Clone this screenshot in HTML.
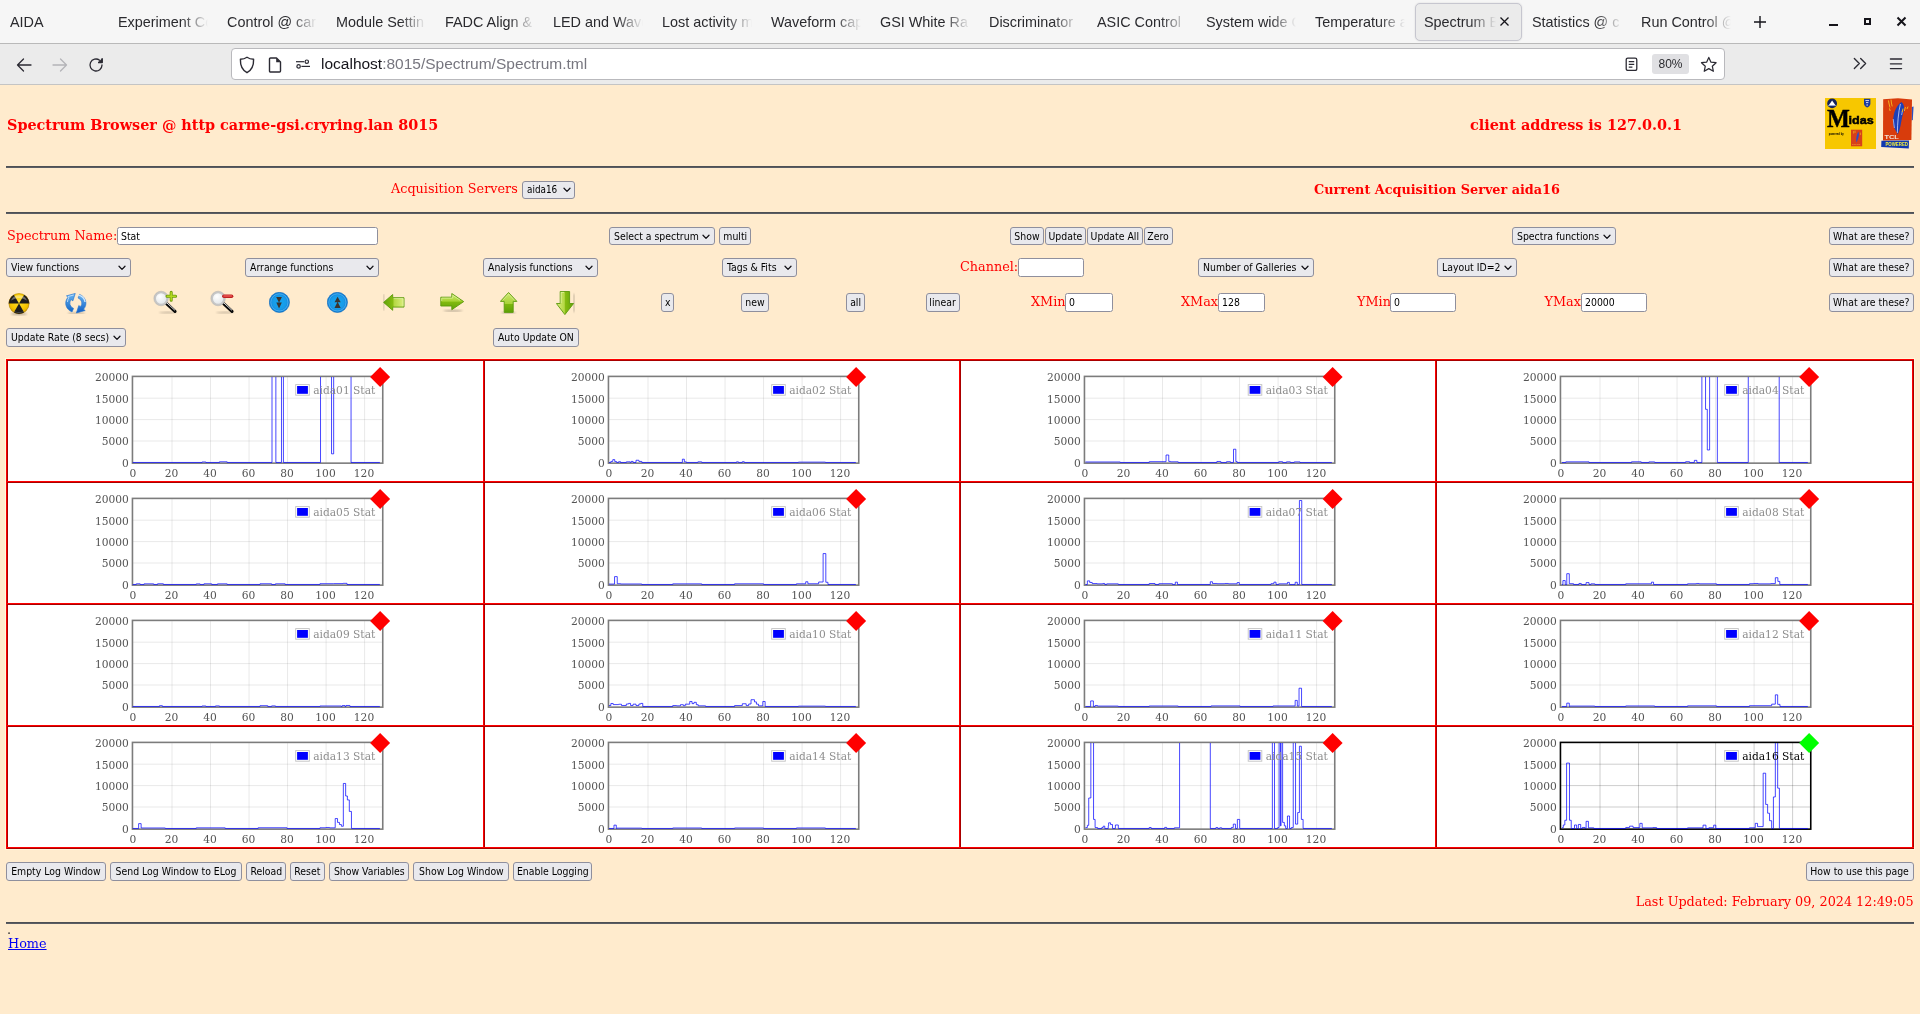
<!DOCTYPE html>
<html lang="en"><head><meta charset="utf-8"><title>Spectrum Browser</title>
<style>
*{box-sizing:border-box;margin:0;padding:0}
html,body{width:1920px;height:1014px;overflow:hidden}
body{background:#ffebcd;position:relative;font-family:"DejaVu Serif","Liberation Serif",serif;font-size:12.8px;color:#f00}
.abs{position:absolute;white-space:nowrap}
.ui{font-family:"DejaVu Sans Condensed","DejaVu Sans","Liberation Sans",sans-serif;font-size:10.67px;color:#000}
.btn{position:absolute;background:#e9e9ed;border:1px solid #8f8f9d;border-radius:3px;line-height:18px;text-align:center;white-space:nowrap;overflow:hidden}
.btn span{display:inline-block;transform:scaleX(.975);transform-origin:50% 50%}
.sel{position:absolute;background:#e9e9ed;border:1px solid #8f8f9d;border-radius:3px;line-height:18px;padding-left:3.6px;white-space:nowrap;overflow:hidden}
.sel span,.inp span{display:inline-block;transform:scaleX(.975);transform-origin:0 50%}
.sel svg{position:absolute;right:3.6px;top:5.8px}
.inp{position:absolute;background:#fff;border:1px solid #8f8f9d;border-radius:2.5px;line-height:18px;padding-left:3px;white-space:nowrap;overflow:hidden}
.hr{position:absolute;left:6px;width:1908px;height:2px;background:linear-gradient(#4e5054 50%,#5a5d64 50%)}
.t{font-family:"Liberation Sans","DejaVu Sans",sans-serif;color:#2a2a2e;position:absolute;white-space:nowrap;overflow:hidden}
</style></head>
<body>
<div id="root" style="position:absolute;left:0;top:0;width:1920px;height:1014px;will-change:transform">
<div class="abs" style="left:0;top:0;width:1920px;height:43px;background:#f6f6f6"></div>
<div class="abs" style="left:0;top:43px;width:1920px;height:1px;background:#b9b9b9"></div>
<div class="abs" style="left:0;top:44px;width:1920px;height:40px;background:#ebebeb"></div>
<div class="abs" style="left:0;top:84px;width:1920px;height:1px;background:#c4c4c4"></div>
<div class="abs" style="left:1415px;top:3px;width:107px;height:38px;background:#ebebeb;border:1px solid #c6c6cf;border-radius:5px;box-shadow:0 0 2px rgba(0,0,0,.12)"></div>
<div class="t" style="left:10px;top:13px;width:60px;font-size:14.4px;line-height:19px;">AIDA</div>
<div class="t" style="left:118px;top:13px;width:90px;font-size:14.4px;line-height:19px;-webkit-mask-image:linear-gradient(to right,#000 64px,transparent 90px);mask-image:linear-gradient(to right,#000 64px,transparent 90px);">Experiment Co</div>
<div class="t" style="left:227px;top:13px;width:90px;font-size:14.4px;line-height:19px;-webkit-mask-image:linear-gradient(to right,#000 64px,transparent 90px);mask-image:linear-gradient(to right,#000 64px,transparent 90px);">Control @ car</div>
<div class="t" style="left:336px;top:13px;width:90px;font-size:14.4px;line-height:19px;-webkit-mask-image:linear-gradient(to right,#000 64px,transparent 90px);mask-image:linear-gradient(to right,#000 64px,transparent 90px);">Module Settin</div>
<div class="t" style="left:445px;top:13px;width:90px;font-size:14.4px;line-height:19px;-webkit-mask-image:linear-gradient(to right,#000 64px,transparent 90px);mask-image:linear-gradient(to right,#000 64px,transparent 90px);">FADC Align &amp;</div>
<div class="t" style="left:553px;top:13px;width:90px;font-size:14.4px;line-height:19px;-webkit-mask-image:linear-gradient(to right,#000 64px,transparent 90px);mask-image:linear-gradient(to right,#000 64px,transparent 90px);">LED and Wave</div>
<div class="t" style="left:662px;top:13px;width:90px;font-size:14.4px;line-height:19px;-webkit-mask-image:linear-gradient(to right,#000 64px,transparent 90px);mask-image:linear-gradient(to right,#000 64px,transparent 90px);">Lost activity m</div>
<div class="t" style="left:771px;top:13px;width:90px;font-size:14.4px;line-height:19px;-webkit-mask-image:linear-gradient(to right,#000 64px,transparent 90px);mask-image:linear-gradient(to right,#000 64px,transparent 90px);">Waveform cap</div>
<div class="t" style="left:880px;top:13px;width:90px;font-size:14.4px;line-height:19px;-webkit-mask-image:linear-gradient(to right,#000 64px,transparent 90px);mask-image:linear-gradient(to right,#000 64px,transparent 90px);">GSI White Ra</div>
<div class="t" style="left:989px;top:13px;width:90px;font-size:14.4px;line-height:19px;-webkit-mask-image:linear-gradient(to right,#000 64px,transparent 90px);mask-image:linear-gradient(to right,#000 64px,transparent 90px);">Discriminator</div>
<div class="t" style="left:1097px;top:13px;width:90px;font-size:14.4px;line-height:19px;-webkit-mask-image:linear-gradient(to right,#000 64px,transparent 90px);mask-image:linear-gradient(to right,#000 64px,transparent 90px);">ASIC Control</div>
<div class="t" style="left:1206px;top:13px;width:90px;font-size:14.4px;line-height:19px;-webkit-mask-image:linear-gradient(to right,#000 64px,transparent 90px);mask-image:linear-gradient(to right,#000 64px,transparent 90px);">System wide C</div>
<div class="t" style="left:1315px;top:13px;width:90px;font-size:14.4px;line-height:19px;-webkit-mask-image:linear-gradient(to right,#000 64px,transparent 90px);mask-image:linear-gradient(to right,#000 64px,transparent 90px);">Temperature a</div>
<div class="t" style="left:1424px;top:13px;width:72px;font-size:14.4px;line-height:19px;-webkit-mask-image:linear-gradient(to right,#000 46px,transparent 72px);mask-image:linear-gradient(to right,#000 46px,transparent 72px);">Spectrum Br</div>
<div class="t" style="left:1532px;top:13px;width:90px;font-size:14.4px;line-height:19px;-webkit-mask-image:linear-gradient(to right,#000 64px,transparent 90px);mask-image:linear-gradient(to right,#000 64px,transparent 90px);">Statistics @ c</div>
<div class="t" style="left:1641px;top:13px;width:90px;font-size:14.4px;line-height:19px;-webkit-mask-image:linear-gradient(to right,#000 64px,transparent 90px);mask-image:linear-gradient(to right,#000 64px,transparent 90px);">Run Control @</div>
<svg class="abs" style="left:1499px;top:16px" width="11" height="11" viewBox="0 0 11 11"><path d="M1.5 1.5L9.5 9.5M9.5 1.5L1.5 9.5" stroke="#15141a" stroke-width="1.3" fill="none"/></svg>
<svg class="abs" style="left:1753px;top:15px" width="14" height="14" viewBox="0 0 14 14"><path d="M7 1V13M1 7H13" stroke="#15141a" stroke-width="1.4" fill="none"/></svg>
<div class="abs" style="left:1829px;top:24px;width:9px;height:2px;background:#15141a"></div>
<div class="abs" style="left:1864px;top:18px;width:7px;height:7px;border:2px solid #15141a"></div>
<svg class="abs" style="left:1896px;top:16px" width="11" height="11" viewBox="0 0 11 11"><path d="M1.5 1.5L9.5 9.5M9.5 1.5L1.5 9.5" stroke="#15141a" stroke-width="2" fill="none"/></svg>
<svg class="abs" style="left:15px;top:56.8px" width="18" height="16" viewBox="0 0 18 16"><path d="M16 8H2.5M8.5 2L2.5 8L8.5 14" stroke="#2b2a33" stroke-width="1.3" fill="none" stroke-linecap="round" stroke-linejoin="round"/></svg>
<svg class="abs" style="left:51px;top:56.8px" width="18" height="16" viewBox="0 0 18 16"><path d="M2 8H15.5M9.5 2L15.5 8L9.5 14" stroke="#b4b4b8" stroke-width="1.3" fill="none" stroke-linecap="round" stroke-linejoin="round"/></svg>
<svg class="abs" style="left:87px;top:55.8px" width="18" height="18" viewBox="0 0 18 18"><path d="M15 9A6 6 0 1 1 12.6 4.2" stroke="#2b2a33" stroke-width="1.3" fill="none" stroke-linecap="round"/><path d="M15.2 2.2V6.4H11" stroke="#2b2a33" stroke-width="1.5" fill="#2b2a33" stroke-linejoin="round"/></svg>
<div class="abs" style="left:231px;top:48px;width:1494px;height:32px;background:#fff;border:1px solid #b9b9bd;border-radius:4px"></div>
<svg class="abs" style="left:239px;top:55.6px" width="16" height="18" viewBox="0 0 16 18"><path d="M8 1.2C10 2.6 12.4 3.2 14.6 3.3C14.8 9 13 14 8 16.7C3 14 1.2 9 1.4 3.3C3.6 3.2 6 2.6 8 1.2Z" stroke="#2b2a33" stroke-width="1.4" fill="none" stroke-linejoin="round"/></svg>
<svg class="abs" style="left:268px;top:56.6px" width="14" height="16" viewBox="0 0 14 16"><path d="M2.5 1H8.5L12.5 5V14A1 1 0 0 1 11.5 15H2.5A1 1 0 0 1 1.5 14V2A1 1 0 0 1 2.5 1Z" stroke="#2b2a33" stroke-width="1.4" fill="none" stroke-linejoin="round"/><path d="M8.2 1V5.3H12.5Z" fill="#2b2a33"/></svg>
<svg class="abs" style="left:295px;top:57px" width="16" height="14" viewBox="0 0 16 14"><circle cx="11.8" cy="4.7" r="1.7" stroke="#2b2a33" stroke-width="1.2" fill="none"/><path d="M1 4.7H9.2" stroke="#2b2a33" stroke-width="1.2"/><circle cx="3.6" cy="9.4" r="1.7" stroke="#2b2a33" stroke-width="1.2" fill="none"/><path d="M6.4 9.4H15" stroke="#2b2a33" stroke-width="1.2"/></svg>
<div class="t" style="left:321px;top:54px;font-size:15.5px;line-height:20px"><span style="color:#15141a">localhost</span><span style="color:#77767f">:8015/Spectrum/Spectrum.tml</span></div>
<svg class="abs" style="left:1625.4px;top:56.8px" width="13" height="14.6" viewBox="0 0 14 16"><rect x="1.2" y="1.2" width="11.6" height="13.6" rx="1.8" stroke="#2b2a33" stroke-width="1.4" fill="none"/><path d="M4 5H10M4 8H10M4 11H8" stroke="#2b2a33" stroke-width="1.3"/></svg>
<div class="abs" style="left:1652px;top:54px;width:37px;height:20px;background:#e0e0e3;border-radius:3px"></div>
<div class="t" style="left:1652px;top:56px;width:37px;text-align:center;font-size:12px;line-height:17px">80%</div>
<svg class="abs" style="left:1700px;top:55.6px" width="17.6" height="16.7" viewBox="0 0 20 19"><path d="M10 1.6L12.5 7L18.3 7.6L14 11.6L15.2 17.4L10 14.4L4.8 17.4L6 11.6L1.7 7.6L7.5 7Z" stroke="#2b2a33" stroke-width="1.4" fill="none" stroke-linejoin="round"/></svg>
<svg class="abs" style="left:1852.6px;top:57.4px" width="14.4" height="13" viewBox="0 0 16 14"><path d="M1.5 1.5L7 7L1.5 12.5M8.5 1.5L14 7L8.5 12.5" stroke="#2b2a33" stroke-width="1.5" fill="none" stroke-linecap="round" stroke-linejoin="round"/></svg>
<svg class="abs" style="left:1888px;top:57px" width="16" height="14" viewBox="0 0 16 14"><path d="M2.4 2H13.6M2.4 6.8H13.6M2.4 11.6H13.6" stroke="#2b2a33" stroke-width="1.3" fill="none" stroke-linecap="round"/></svg>
<div class="abs" style="left:7px;top:115.63px;font-size:14.4px;line-height:18px;font-weight:bold;">Spectrum Browser @ http carme-gsi.cryring.lan 8015</div>
<div class="abs" style="left:1470px;top:115.63px;font-size:14.4px;line-height:18px;font-weight:bold;">client address is 127.0.0.1</div>
<div class="hr" style="top:166px"></div>
<div class="abs" style="left:391px;top:180.88px;font-size:12.8px;line-height:16px;">Acquisition Servers</div>
<div class="sel ui" style="left:522px;top:181px;width:53px;height:18px"><span style="transform:scaleX(.925);position:relative;top:-1px">aida16</span><svg style="right:2.8px;top:5.2px" width="8" height="6" viewBox="0 0 8 6"><path d="M1 1.2L4 4.4L7 1.2" stroke="#15141a" stroke-width="1.3" fill="none" stroke-linecap="round" stroke-linejoin="round"/></svg></div>
<div class="abs" style="left:1314px;top:181.58px;font-size:12.8px;line-height:16px;font-weight:bold;">Current Acquisition Server aida16</div>
<div class="hr" style="top:212px"></div>
<div class="abs" style="left:7px;top:227.58px;font-size:12.8px;line-height:16px;">Spectrum Name:</div>
<div class="inp ui" style="left:117px;top:227px;width:261px;height:18px"><span>Stat</span></div>
<div class="sel ui" style="left:609px;top:227px;width:106px;height:18px"><span>Select a spectrum</span><svg width="8" height="6" viewBox="0 0 8 6"><path d="M1 1.2L4 4.4L7 1.2" stroke="#15141a" stroke-width="1.3" fill="none" stroke-linecap="round" stroke-linejoin="round"/></svg></div>
<div class="btn ui" style="left:719px;top:227px;width:32px;height:18px"><span>multi</span></div>
<div class="btn ui" style="left:1010px;top:227px;width:34px;height:18px"><span>Show</span></div>
<div class="btn ui" style="left:1045px;top:227px;width:41px;height:18px"><span>Update</span></div>
<div class="btn ui" style="left:1087px;top:227px;width:56px;height:18px"><span>Update All</span></div>
<div class="btn ui" style="left:1144px;top:227px;width:29px;height:18px"><span>Zero</span></div>
<div class="sel ui" style="left:1512px;top:227px;width:104px;height:18px"><span>Spectra functions</span><svg width="8" height="6" viewBox="0 0 8 6"><path d="M1 1.2L4 4.4L7 1.2" stroke="#15141a" stroke-width="1.3" fill="none" stroke-linecap="round" stroke-linejoin="round"/></svg></div>
<div class="btn ui" style="left:1829px;top:227px;width:85px;height:18px"><span>What are these?</span></div>
<div class="sel ui" style="left:6px;top:258px;width:125px;height:19px"><span>View functions</span><svg width="8" height="6" viewBox="0 0 8 6"><path d="M1 1.2L4 4.4L7 1.2" stroke="#15141a" stroke-width="1.3" fill="none" stroke-linecap="round" stroke-linejoin="round"/></svg></div>
<div class="sel ui" style="left:245px;top:258px;width:134px;height:19px"><span>Arrange functions</span><svg width="8" height="6" viewBox="0 0 8 6"><path d="M1 1.2L4 4.4L7 1.2" stroke="#15141a" stroke-width="1.3" fill="none" stroke-linecap="round" stroke-linejoin="round"/></svg></div>
<div class="sel ui" style="left:483px;top:258px;width:115px;height:19px"><span>Analysis functions</span><svg width="8" height="6" viewBox="0 0 8 6"><path d="M1 1.2L4 4.4L7 1.2" stroke="#15141a" stroke-width="1.3" fill="none" stroke-linecap="round" stroke-linejoin="round"/></svg></div>
<div class="sel ui" style="left:722px;top:258px;width:75px;height:19px"><span>Tags &amp; Fits</span><svg width="8" height="6" viewBox="0 0 8 6"><path d="M1 1.2L4 4.4L7 1.2" stroke="#15141a" stroke-width="1.3" fill="none" stroke-linecap="round" stroke-linejoin="round"/></svg></div>
<div class="abs" style="left:960px;top:258.88px;font-size:12.8px;line-height:16px;">Channel:</div>
<div class="inp ui" style="left:1018px;top:258px;width:66px;height:19px"><span></span></div>
<div class="sel ui" style="left:1198px;top:258px;width:116px;height:19px"><span>Number of Galleries</span><svg width="8" height="6" viewBox="0 0 8 6"><path d="M1 1.2L4 4.4L7 1.2" stroke="#15141a" stroke-width="1.3" fill="none" stroke-linecap="round" stroke-linejoin="round"/></svg></div>
<div class="sel ui" style="left:1437px;top:258px;width:80px;height:19px"><span>Layout ID=2</span><svg width="8" height="6" viewBox="0 0 8 6"><path d="M1 1.2L4 4.4L7 1.2" stroke="#15141a" stroke-width="1.3" fill="none" stroke-linecap="round" stroke-linejoin="round"/></svg></div>
<div class="btn ui" style="left:1829px;top:258px;width:85px;height:19px"><span>What are these?</span></div>
<div class="btn ui" style="left:661px;top:293px;width:13px;height:19px"><span>x</span></div>
<div class="btn ui" style="left:741px;top:293px;width:28px;height:19px"><span>new</span></div>
<div class="btn ui" style="left:846px;top:293px;width:19px;height:19px"><span>all</span></div>
<div class="btn ui" style="left:926px;top:293px;width:33.5px;height:19px"><span>linear</span></div>
<div class="abs" style="left:1031px;top:293.58px;font-size:12.8px;line-height:16px;">XMin</div>
<div class="inp ui" style="left:1065px;top:293px;width:48px;height:19px"><span>0</span></div>
<div class="abs" style="left:1181px;top:293.58px;font-size:12.8px;line-height:16px;">XMax</div>
<div class="inp ui" style="left:1218px;top:293px;width:47px;height:19px"><span>128</span></div>
<div class="abs" style="left:1357px;top:293.58px;font-size:12.8px;line-height:16px;">YMin</div>
<div class="inp ui" style="left:1390px;top:293px;width:66px;height:19px"><span>0</span></div>
<div class="abs" style="left:1544.5px;top:293.58px;font-size:12.8px;line-height:16px;">YMax</div>
<div class="inp ui" style="left:1581px;top:293px;width:66px;height:19px"><span>20000</span></div>
<div class="btn ui" style="left:1829px;top:293px;width:85px;height:19px"><span>What are these?</span></div>
<div class="sel ui" style="left:6px;top:328px;width:120px;height:19px"><span>Update Rate (8 secs)</span><svg width="8" height="6" viewBox="0 0 8 6"><path d="M1 1.2L4 4.4L7 1.2" stroke="#15141a" stroke-width="1.3" fill="none" stroke-linecap="round" stroke-linejoin="round"/></svg></div>
<div class="btn ui" style="left:493px;top:328px;width:86px;height:19px"><span>Auto Update ON</span></div>
<svg width="0" height="0" style="position:absolute"><defs>
<radialGradient id="gY" cx="0.5" cy="0.4" r="0.7"><stop offset="0" stop-color="#ffe030"/><stop offset="0.6" stop-color="#f5c400"/><stop offset="1" stop-color="#c89000"/></radialGradient>
<radialGradient id="gB" cx="0.5" cy="0.5" r="0.55"><stop offset="0" stop-color="#14a8f2"/><stop offset="0.6" stop-color="#189ae8"/><stop offset="1" stop-color="#0a72cc"/></radialGradient>
<linearGradient id="gG" x1="0" y1="0" x2="0" y2="1"><stop offset="0" stop-color="#d2ea72"/><stop offset="0.48" stop-color="#a6d232"/><stop offset="0.52" stop-color="#82ba10"/><stop offset="1" stop-color="#62a208"/></linearGradient>
<linearGradient id="gGl" x1="0" y1="0" x2="1" y2="0"><stop offset="0" stop-color="#62a208"/><stop offset="0.45" stop-color="#86bc12"/><stop offset="0.52" stop-color="#b4d844"/><stop offset="1" stop-color="#dcee80"/></linearGradient>
<linearGradient id="gGu" x1="0" y1="0" x2="0" y2="1"><stop offset="0" stop-color="#cfe870"/><stop offset="0.56" stop-color="#a8d238"/><stop offset="0.6" stop-color="#7cb60e"/><stop offset="1" stop-color="#5ea006"/></linearGradient>
<linearGradient id="gGd" x1="0" y1="0" x2="1" y2="0"><stop offset="0" stop-color="#dcee80"/><stop offset="0.46" stop-color="#b4d844"/><stop offset="0.52" stop-color="#86bc12"/><stop offset="1" stop-color="#62a208"/></linearGradient>
<linearGradient id="gR2" x1="0" y1="0" x2="0" y2="1"><stop offset="0" stop-color="#0d5cc4"/><stop offset="1" stop-color="#6ab6f2"/></linearGradient>
<linearGradient id="gGh" x1="0" y1="0" x2="1" y2="0"><stop offset="0" stop-color="#7fb518"/><stop offset="0.5" stop-color="#b6dc48"/><stop offset="1" stop-color="#6aa20e"/></linearGradient>
<linearGradient id="gR" x1="0" y1="0" x2="0" y2="1"><stop offset="0" stop-color="#6ab6f2"/><stop offset="1" stop-color="#1466c4"/></linearGradient>
<radialGradient id="gL" cx="0.4" cy="0.35" r="0.7"><stop offset="0" stop-color="#ffffff"/><stop offset="1" stop-color="#dfe3e6"/></radialGradient>
<filter id="sh" x="-20%" y="-20%" width="140%" height="160%"><feGaussianBlur stdDeviation="0.8"/></filter>
</defs></svg>
<svg class="abs" style="left:8.1px;top:292.6px" width="22" height="23" viewBox="0 0 22 23"><ellipse cx="11" cy="20.9" rx="8" ry="1.3" fill="#000" opacity=".28" filter="url(#sh)"/><circle cx="11" cy="10.6" r="10.3" fill="url(#gY)"/><g fill="#1c1c1c"><path d="M11 10.6L16.15 1.68A10.3 10.3 0 0 1 21.3 10.6Z"/><path d="M11 10.6L16.15 19.52A10.3 10.3 0 0 1 5.85 19.52Z"/><path d="M11 10.6L0.7 10.6A10.3 10.3 0 0 1 5.85 1.68Z"/></g><circle cx="11" cy="10.6" r="10.1" fill="none" stroke="#6a4a00" stroke-width=".5" opacity=".6"/><path d="M3 7.6A8.6 8.6 0 0 1 19 7.6A14 14 0 0 0 3 7.6Z" fill="#fff" opacity=".35"/><path d="M4.4 17A9 9 0 0 0 17.6 17A12 12 0 0 1 4.4 17Z" fill="#fff" opacity=".25"/></svg>
<svg class="abs" style="left:64.4px;top:292.5px" width="23.6" height="21.5" viewBox="0 0 23.6 21.5"><g transform="scale(1.075,1)"><ellipse cx="11.5" cy="20.4" rx="8" ry="1.1" fill="#000" opacity=".22" filter="url(#sh)"/><path d="M7.48 18.92A9.4 9.4 0 0 1 3.8 4.16L2.27 2.87L10.49 .41L8.24 7.89L6.71 6.6A5.6 5.6 0 0 0 8.9 15.39Z" fill="url(#gR)" stroke="#2373cf" stroke-width=".6" stroke-linejoin="round"/><g transform="rotate(180 11 10.2)"><path d="M7.48 18.92A9.4 9.4 0 0 1 3.8 4.16L2.27 2.87L10.49 .41L8.24 7.89L6.71 6.6A5.6 5.6 0 0 0 8.9 15.39Z" fill="url(#gR2)" stroke="#2373cf" stroke-width=".6" stroke-linejoin="round"/></g><path d="M3.2 9A8.4 8.4 0 0 1 4.6 4.6L3.6 3.6L9 2" fill="none" stroke="#d6ecff" stroke-width=".9" opacity=".8"/><path d="M13.4 2.2A8.2 8.2 0 0 1 19.6 9" fill="none" stroke="#e4f2ff" stroke-width="1.3" opacity=".85"/></g></svg>
<svg class="abs" style="left:152.5px;top:290px" width="25" height="24" viewBox="0 0 25 24"><ellipse cx="15" cy="22.6" rx="9" ry="1" fill="#000" opacity=".22" filter="url(#sh)"/><path d="M13.6 13.6L22 21.4" stroke="#0a0a0a" stroke-width="3.2" stroke-linecap="round"/><path d="M13.8 12.8L21.6 20" stroke="#e8e8e8" stroke-width="1" stroke-linecap="round"/><circle cx="8.1" cy="8.5" r="6.2" fill="url(#gL)" stroke="#c6c6c6" stroke-width="2.1"/><circle cx="8.1" cy="8.5" r="7.3" fill="none" stroke="#a8a8a8" stroke-width=".4"/><path d="M18.2 2.2V10.2M14 6.2H22.6" stroke="#6c9c08" stroke-width="3" stroke-linecap="round"/><path d="M18.2 2.4V10M14.2 6.2H22.4" stroke="#b4d820" stroke-width="1.5" stroke-linecap="round"/></svg>
<svg class="abs" style="left:209.9px;top:290px" width="25" height="24" viewBox="0 0 25 24"><ellipse cx="15" cy="22.6" rx="9" ry="1" fill="#000" opacity=".22" filter="url(#sh)"/><path d="M13.6 13.6L22 21.4" stroke="#0a0a0a" stroke-width="3.2" stroke-linecap="round"/><path d="M13.8 12.8L21.6 20" stroke="#e8e8e8" stroke-width="1" stroke-linecap="round"/><circle cx="8.1" cy="8.5" r="6.2" fill="url(#gL)" stroke="#c6c6c6" stroke-width="2.1"/><circle cx="8.1" cy="8.5" r="7.3" fill="none" stroke="#a8a8a8" stroke-width=".4"/><path d="M13.8 6.15H21.6" stroke="#c02222" stroke-width="3.5" stroke-linecap="round"/><path d="M14 5.9H21.4" stroke="#ea5656" stroke-width="1.5" stroke-linecap="round"/></svg>
<svg class="abs" style="left:268.6px;top:291.9px" width="21" height="21" viewBox="0 0 21 21"><circle cx="10.4" cy="10.4" r="10.1" fill="url(#gB)" stroke="#0c68bc" stroke-width=".6"/><circle cx="10.4" cy="10.4" r="8.6" fill="none" stroke="#8fd4ff" stroke-width=".8" opacity=".55"/><path d="M7.2 5.1H12.9L10.05 10.7ZM7.3 10.4H12.8L10.05 16.6Z" fill="#3b3430"/></svg>
<svg class="abs" style="left:327.3px;top:291.9px" width="21" height="21" viewBox="0 0 21 21"><circle cx="10.4" cy="10.4" r="10.1" fill="url(#gB)" stroke="#0c68bc" stroke-width=".6"/><circle cx="10.4" cy="10.4" r="8.6" fill="none" stroke="#8fd4ff" stroke-width=".8" opacity=".55"/><path d="M10.6 4.8L13.7 10.2H7.5ZM10.6 9.7L13.7 16H7.5Z" fill="#3b3430"/></svg>
<svg class="abs" style="left:383.1px;top:294.2px" width="22" height="17" viewBox="0 0 22 17"><rect x="-.4" y="0" width="1.4" height="16.6" fill="#000" opacity=".25" filter="url(#sh)"/><path d="M.6 8.4L9.7 .5V3.7H21V13.1H9.7V16.3Z" fill="url(#gGl)" stroke="#5b9a0c" stroke-width=".9" stroke-linejoin="round"/><path d="M10.6 4.6H20.1V12.2" fill="none" stroke="#eefac0" stroke-width=".8" opacity=".7"/></svg>
<svg class="abs" style="left:439.6px;top:292.8px" width="25" height="19.5" viewBox="0 0 25 19.5"><ellipse cx="13" cy="17.8" rx="10" ry=".9" fill="#000" opacity=".3" filter="url(#sh)"/><path d="M.8 4.2H11.8V.5L23.7 8.6L11.8 16.7V13H.8Z" fill="url(#gG)" stroke="#5b9a0c" stroke-width=".9" stroke-linejoin="round"/><path d="M1.7 8V5.1H12.7V2.3L20 7.2" fill="none" stroke="#e8f7b0" stroke-width=".8" opacity=".75"/></svg>
<svg class="abs" style="left:500.1px;top:291.8px" width="17.5" height="22" viewBox="0 0 17.5 22"><ellipse cx="8.6" cy="20.8" rx="7.5" ry=".9" fill="#000" opacity=".3" filter="url(#sh)"/><path d="M8.55 .5L16.9 9.4H13.2V20.4H4.2V9.4H.4Z" fill="url(#gGu)" stroke="#5b9a0c" stroke-width=".9" stroke-linejoin="round"/><path d="M2.6 8.5L8.55 2L14.6 8.5" fill="none" stroke="#e8f7b0" stroke-width=".8" opacity=".6"/></svg>
<svg class="abs" style="left:556px;top:290.5px" width="19" height="24.5" viewBox="0 0 19 24.5"><rect x="17.3" y="3" width="1.3" height="18" fill="#000" opacity=".3" filter="url(#sh)"/><path d="M8.9 23.6L17.6 12.5H13.6V.5H4.2V12.5H.4Z" fill="url(#gGd)" stroke="#5b9a0c" stroke-width=".9" stroke-linejoin="round"/><path d="M5.1 12V1.4H8" fill="none" stroke="#eefac0" stroke-width=".8" opacity=".7"/></svg>
<svg class="abs" style="left:1825px;top:98px" width="51" height="51" viewBox="0 0 51 51"><rect width="51" height="51" fill="#f7c700"/><circle cx="7.1" cy="5.4" r="4.9" fill="#16245e"/><path d="M3.6 7.6L7.1 2.4L10.6 7.6Z" fill="#fff"/><path d="M3 7.6H11.2" stroke="#9fb4e8" stroke-width=".7"/><path d="M39 .8H45.4V5.6C45.4 7.8 43.8 9 42.2 9.6C40.6 9 39 7.8 39 5.6Z" fill="#1a3a9c"/><path d="M40.4 2.6H44M41 4.6H43.4M41.4 7H43" stroke="#e8ecff" stroke-width=".9"/><text x="1.9" y="28.7" font-family="'Liberation Serif',serif" font-weight="bold" font-size="24.2" fill="#000" stroke="#000" stroke-width=".4">M</text><text x="23.6" y="25.7" font-family="'Liberation Sans',sans-serif" font-weight="bold" font-size="11.2" textLength="25.2" lengthAdjust="spacingAndGlyphs" fill="#000" stroke="#000" stroke-width=".5">idas</text><text x="3.8" y="36.6" font-family="'Liberation Sans',sans-serif" font-weight="bold" font-size="3" textLength="15" lengthAdjust="spacingAndGlyphs" fill="#000">powered by</text><rect x="26" y="31.7" width="11.2" height="16.6" fill="#d8401a"/><path d="M33.4 33.6C34.6 36.6 33.6 41 31.4 44.4C30.8 41 31.6 36.4 33.4 33.6Z" fill="#2b4bc8"/><path d="M28.6 33V35.6M30 32.6V35M35.4 34.6V37" stroke="#f4c020" stroke-width=".6"/><text x="27" y="46.6" font-family="'Liberation Sans',sans-serif" font-weight="bold" font-size="2.4" textLength="8.6" lengthAdjust="spacingAndGlyphs" fill="#f2a23a">TCL/TK</text></svg>
<svg class="abs" style="left:1881px;top:98px" width="33" height="51" viewBox="0 0 33 51"><path d="M30.6 9L32.6 8.6L31.8 22L30.4 22.4Z" fill="#2a50c0"/><path d="M2.2 1.2L17 .2L31 1.6L30.4 42L2 42.6Z" fill="#d83c0c"/><path d="M20.4 4C25 7.6 22.6 14 21.2 19C19.8 25 19.4 31 16.8 36.6C15.6 33 12.4 30 12.2 26C11.6 19 13.6 8.6 20.4 4Z" fill="#1c40b8"/><path d="M19.4 6C17.4 14 16.4 26 16.4 35" stroke="#e8eeff" stroke-width=".7" fill="none"/><path d="M12.2 21L13.4 30M21.6 12L20.6 17" stroke="#e8eeff" stroke-width=".6" fill="none"/><path d="M7.4 2.4C7.8 5 8.4 7 9 9.6M10 1.6C10.2 4 10.6 6 11.2 8.4M8.4 10.4L9.2 13M22 10.6L21.2 14M24.4 9L23.4 13M27 8.6L26 11" stroke="#f4b020" stroke-width="1" fill="none"/><text x="3.4" y="41" font-family="'Liberation Sans',sans-serif" font-weight="bold" font-size="6" textLength="14.4" lengthAdjust="spacingAndGlyphs" fill="#f2e4d8">TCL</text><path d="M.4 42.8L28 42.4L27.8 50.4L.2 49Z" fill="#1038b0"/><text x="4.4" y="48.2" font-family="'Liberation Sans',sans-serif" font-weight="bold" font-size="5.2" textLength="22.6" lengthAdjust="spacingAndGlyphs" fill="#f4ee3a">POWERED</text></svg>
<div class="abs" style="left:5px;top:358px;width:1910px;height:492px;background:#fff;border:1px solid #fff8dc"></div>
<svg class="abs" style="will-change:transform;left:0;top:0;font-family:'DejaVu Serif','Liberation Serif',serif" width="1920" height="1014" viewBox="0 0 1920 1014">
<defs><clipPath id="cp"><rect x="132.45" y="377.00" width="250.30" height="86.75"/></clipPath></defs>
<g transform="translate(0.00,0.00)"><path d="M172.02 376.40V463.15M210.54 376.40V463.15M249.06 376.40V463.15M287.58 376.40V463.15M326.10 376.40V463.15M364.62 376.40V463.15M132.45 441.00H382.75M132.45 419.60H382.75M132.45 398.20H382.75" stroke="#000" stroke-opacity="0.10" stroke-width="0.9" fill="none"/><rect x="132.45" y="376.40" width="250.30" height="86.75" fill="none" stroke="#7c7c7c" stroke-width="1.6"/><path d="M132.44 462.46H202.03V461.98H205.89V462.46H219.43V461.79H227.16V462.46H272.00V334.00H275.87V462.46H281.47V334.00H283.41V462.46H320.52V334.00H331.54V453.84H333.67V334.00H351.06V462.46H379.86" stroke="#00f" stroke-opacity="0.72" stroke-width="1" stroke-linejoin="round" fill="none" clip-path="url(#cp)"/><g fill="#545454" font-size="10.67"><text x="128.8" y="466.50" text-anchor="end">0</text><text x="128.8" y="445.10" text-anchor="end">5000</text><text x="128.8" y="424.10" text-anchor="end">10000</text><text x="128.8" y="403.20" text-anchor="end">15000</text><text x="128.8" y="380.90" text-anchor="end">20000</text><text x="132.90" y="476.9" text-anchor="middle">0</text><text x="171.42" y="476.9" text-anchor="middle">20</text><text x="209.94" y="476.9" text-anchor="middle">40</text><text x="248.46" y="476.9" text-anchor="middle">60</text><text x="286.98" y="476.9" text-anchor="middle">80</text><text x="325.50" y="476.9" text-anchor="middle">100</text><text x="364.02" y="476.9" text-anchor="middle">120</text></g><g transform="translate(0.0,0)"><rect x="295.7" y="384.6" width="13.6" height="10.6" fill="#fff" stroke="#c2c2c2" stroke-width="0.9"/><rect x="297.1" y="386" width="10.8" height="7.8" fill="#00f"/><text x="313.2" y="394.1" font-size="10.67" fill="#8e8e8e">aida01 Stat</text><path d="M380.1 366.9L390.1 376.9L380.1 386.9L370.1 376.9Z" fill="#f00"/></g></g>
<g transform="translate(476.00,0.00)"><path d="M172.02 376.40V463.15M210.54 376.40V463.15M249.06 376.40V463.15M287.58 376.40V463.15M326.10 376.40V463.15M364.62 376.40V463.15M132.45 441.00H382.75M132.45 419.60H382.75M132.45 398.20H382.75" stroke="#000" stroke-opacity="0.10" stroke-width="0.9" fill="none"/><rect x="132.45" y="376.40" width="250.30" height="86.75" fill="none" stroke="#7c7c7c" stroke-width="1.6"/><path d="M132.94 462.46H134.87V461.43H136.81V459.62H138.74V461.57H140.67V462.46H142.60V461.70H144.54V462.46H150.34V461.84H154.20V462.46H155.17V461.43H157.10V462.46H160.00V460.26H162.90V461.43H165.80V462.46H206.39V459.19H208.33V461.84H210.26V462.46H221.86V461.84H225.72V462.46H260.52V461.84H262.45V462.46H266.32V461.70H268.25V462.46H322.37V462.12H349.44V462.46H379.86" stroke="#00f" stroke-opacity="0.72" stroke-width="1" stroke-linejoin="round" fill="none" clip-path="url(#cp)"/><g fill="#545454" font-size="10.67"><text x="128.8" y="466.50" text-anchor="end">0</text><text x="128.8" y="445.10" text-anchor="end">5000</text><text x="128.8" y="424.10" text-anchor="end">10000</text><text x="128.8" y="403.20" text-anchor="end">15000</text><text x="128.8" y="380.90" text-anchor="end">20000</text><text x="132.90" y="476.9" text-anchor="middle">0</text><text x="171.42" y="476.9" text-anchor="middle">20</text><text x="209.94" y="476.9" text-anchor="middle">40</text><text x="248.46" y="476.9" text-anchor="middle">60</text><text x="286.98" y="476.9" text-anchor="middle">80</text><text x="325.50" y="476.9" text-anchor="middle">100</text><text x="364.02" y="476.9" text-anchor="middle">120</text></g><g transform="translate(0.0,0)"><rect x="295.7" y="384.6" width="13.6" height="10.6" fill="#fff" stroke="#c2c2c2" stroke-width="0.9"/><rect x="297.1" y="386" width="10.8" height="7.8" fill="#00f"/><text x="313.2" y="394.1" font-size="10.67" fill="#8e8e8e">aida02 Stat</text><path d="M380.1 366.9L390.1 376.9L380.1 386.9L370.1 376.9Z" fill="#f00"/></g></g>
<g transform="translate(952.00,0.00)"><path d="M172.02 376.40V463.15M210.54 376.40V463.15M249.06 376.40V463.15M287.58 376.40V463.15M326.10 376.40V463.15M364.62 376.40V463.15M132.45 441.00H382.75M132.45 419.60H382.75M132.45 398.20H382.75" stroke="#000" stroke-opacity="0.10" stroke-width="0.9" fill="none"/><rect x="132.45" y="376.40" width="250.30" height="86.75" fill="none" stroke="#7c7c7c" stroke-width="1.6"/><path d="M133.44 461.98H168.23V462.46H197.23V461.68H214.05V455.00H216.75V461.43H218.49V461.79H226.22V462.46H264.88V461.48H268.75V462.46H274.55V461.68H278.41V462.46H281.51V449.22H283.83V461.57H285.18V462.46H326.74V461.70H330.61V462.46H334.47V461.84H338.34V462.46H342.20V461.90H348.00V462.46H379.86" stroke="#00f" stroke-opacity="0.72" stroke-width="1" stroke-linejoin="round" fill="none" clip-path="url(#cp)"/><g fill="#545454" font-size="10.67"><text x="128.8" y="466.50" text-anchor="end">0</text><text x="128.8" y="445.10" text-anchor="end">5000</text><text x="128.8" y="424.10" text-anchor="end">10000</text><text x="128.8" y="403.20" text-anchor="end">15000</text><text x="128.8" y="380.90" text-anchor="end">20000</text><text x="132.90" y="476.9" text-anchor="middle">0</text><text x="171.42" y="476.9" text-anchor="middle">20</text><text x="209.94" y="476.9" text-anchor="middle">40</text><text x="248.46" y="476.9" text-anchor="middle">60</text><text x="286.98" y="476.9" text-anchor="middle">80</text><text x="325.50" y="476.9" text-anchor="middle">100</text><text x="364.02" y="476.9" text-anchor="middle">120</text></g><g transform="translate(0.5,0)"><rect x="295.7" y="384.6" width="13.6" height="10.6" fill="#fff" stroke="#c2c2c2" stroke-width="0.9"/><rect x="297.1" y="386" width="10.8" height="7.8" fill="#00f"/><text x="313.2" y="394.1" font-size="10.67" fill="#8e8e8e">aida03 Stat</text><path d="M380.1 366.9L390.1 376.9L380.1 386.9L370.1 376.9Z" fill="#f00"/></g></g>
<g transform="translate(1428.00,0.00)"><path d="M172.02 376.40V463.15M210.54 376.40V463.15M249.06 376.40V463.15M287.58 376.40V463.15M326.10 376.40V463.15M364.62 376.40V463.15M132.45 441.00H382.75M132.45 419.60H382.75M132.45 398.20H382.75" stroke="#000" stroke-opacity="0.10" stroke-width="0.9" fill="none"/><rect x="132.45" y="376.40" width="250.30" height="86.75" fill="none" stroke="#7c7c7c" stroke-width="1.6"/><path d="M133.94 462.46H137.81V461.84H161.00V462.46H203.53V461.79H213.19V462.46H220.93V461.90H226.72V462.46H257.65V461.70H261.52V462.46H266.35V460.35H268.86V462.46H273.89V334.00H277.56V409.33H279.30V449.99H281.62V334.00H289.35V462.46H320.28V334.00H351.21V462.46H379.86" stroke="#00f" stroke-opacity="0.72" stroke-width="1" stroke-linejoin="round" fill="none" clip-path="url(#cp)"/><g fill="#545454" font-size="10.67"><text x="128.8" y="466.50" text-anchor="end">0</text><text x="128.8" y="445.10" text-anchor="end">5000</text><text x="128.8" y="424.10" text-anchor="end">10000</text><text x="128.8" y="403.20" text-anchor="end">15000</text><text x="128.8" y="380.90" text-anchor="end">20000</text><text x="132.90" y="476.9" text-anchor="middle">0</text><text x="171.42" y="476.9" text-anchor="middle">20</text><text x="209.94" y="476.9" text-anchor="middle">40</text><text x="248.46" y="476.9" text-anchor="middle">60</text><text x="286.98" y="476.9" text-anchor="middle">80</text><text x="325.50" y="476.9" text-anchor="middle">100</text><text x="364.02" y="476.9" text-anchor="middle">120</text></g><g transform="translate(1.0,0)"><rect x="295.7" y="384.6" width="13.6" height="10.6" fill="#fff" stroke="#c2c2c2" stroke-width="0.9"/><rect x="297.1" y="386" width="10.8" height="7.8" fill="#00f"/><text x="313.2" y="394.1" font-size="10.67" fill="#8e8e8e">aida04 Stat</text><path d="M380.1 366.9L390.1 376.9L380.1 386.9L370.1 376.9Z" fill="#f00"/></g></g>
<g transform="translate(0.00,122.00)"><path d="M172.02 376.40V463.15M210.54 376.40V463.15M249.06 376.40V463.15M287.58 376.40V463.15M326.10 376.40V463.15M364.62 376.40V463.15M132.45 441.00H382.75M132.45 419.60H382.75M132.45 398.20H382.75" stroke="#000" stroke-opacity="0.10" stroke-width="0.9" fill="none"/><rect x="132.45" y="376.40" width="250.30" height="86.75" fill="none" stroke="#7c7c7c" stroke-width="1.6"/><path d="M132.44 462.46H136.31V461.79H140.17V462.46H144.04V461.84H153.70V462.46H157.57V461.76H163.37V462.46H196.23V461.90H200.09V462.46H203.96V461.79H211.69V462.46H217.49V461.84H227.16V462.46H260.02V461.76H271.62V462.46H275.48V461.79H285.15V462.46H319.94V461.70H333.47V461.62H343.14V461.34H347.00V462.46H379.86" stroke="#00f" stroke-opacity="0.72" stroke-width="1" stroke-linejoin="round" fill="none" clip-path="url(#cp)"/><g fill="#545454" font-size="10.67"><text x="128.8" y="466.50" text-anchor="end">0</text><text x="128.8" y="445.10" text-anchor="end">5000</text><text x="128.8" y="424.10" text-anchor="end">10000</text><text x="128.8" y="403.20" text-anchor="end">15000</text><text x="128.8" y="380.90" text-anchor="end">20000</text><text x="132.90" y="476.9" text-anchor="middle">0</text><text x="171.42" y="476.9" text-anchor="middle">20</text><text x="209.94" y="476.9" text-anchor="middle">40</text><text x="248.46" y="476.9" text-anchor="middle">60</text><text x="286.98" y="476.9" text-anchor="middle">80</text><text x="325.50" y="476.9" text-anchor="middle">100</text><text x="364.02" y="476.9" text-anchor="middle">120</text></g><g transform="translate(0.0,0)"><rect x="295.7" y="384.6" width="13.6" height="10.6" fill="#fff" stroke="#c2c2c2" stroke-width="0.9"/><rect x="297.1" y="386" width="10.8" height="7.8" fill="#00f"/><text x="313.2" y="394.1" font-size="10.67" fill="#8e8e8e">aida05 Stat</text><path d="M380.1 366.9L390.1 376.9L380.1 386.9L370.1 376.9Z" fill="#f00"/></g></g>
<g transform="translate(476.00,122.00)"><path d="M172.02 376.40V463.15M210.54 376.40V463.15M249.06 376.40V463.15M287.58 376.40V463.15M326.10 376.40V463.15M364.62 376.40V463.15M132.45 441.00H382.75M132.45 419.60H382.75M132.45 398.20H382.75" stroke="#000" stroke-opacity="0.10" stroke-width="0.9" fill="none"/><rect x="132.45" y="376.40" width="250.30" height="86.75" fill="none" stroke="#7c7c7c" stroke-width="1.6"/><path d="M132.94 462.07H138.55V454.61H141.25V461.70H144.54V461.98H165.80V462.46H196.73V461.84H225.72V462.46H258.59V461.79H287.58V462.46H320.44V461.79H329.72V459.75H331.85V461.76H342.67V460.00H347.12V431.58H349.82V460.26H351.95V462.46H379.86" stroke="#00f" stroke-opacity="0.72" stroke-width="1" stroke-linejoin="round" fill="none" clip-path="url(#cp)"/><g fill="#545454" font-size="10.67"><text x="128.8" y="466.50" text-anchor="end">0</text><text x="128.8" y="445.10" text-anchor="end">5000</text><text x="128.8" y="424.10" text-anchor="end">10000</text><text x="128.8" y="403.20" text-anchor="end">15000</text><text x="128.8" y="380.90" text-anchor="end">20000</text><text x="132.90" y="476.9" text-anchor="middle">0</text><text x="171.42" y="476.9" text-anchor="middle">20</text><text x="209.94" y="476.9" text-anchor="middle">40</text><text x="248.46" y="476.9" text-anchor="middle">60</text><text x="286.98" y="476.9" text-anchor="middle">80</text><text x="325.50" y="476.9" text-anchor="middle">100</text><text x="364.02" y="476.9" text-anchor="middle">120</text></g><g transform="translate(0.0,0)"><rect x="295.7" y="384.6" width="13.6" height="10.6" fill="#fff" stroke="#c2c2c2" stroke-width="0.9"/><rect x="297.1" y="386" width="10.8" height="7.8" fill="#00f"/><text x="313.2" y="394.1" font-size="10.67" fill="#8e8e8e">aida06 Stat</text><path d="M380.1 366.9L390.1 376.9L380.1 386.9L370.1 376.9Z" fill="#f00"/></g></g>
<g transform="translate(952.00,122.00)"><path d="M172.02 376.40V463.15M210.54 376.40V463.15M249.06 376.40V463.15M287.58 376.40V463.15M326.10 376.40V463.15M364.62 376.40V463.15M132.45 441.00H382.75M132.45 419.60H382.75M132.45 398.20H382.75" stroke="#000" stroke-opacity="0.10" stroke-width="0.9" fill="none"/><rect x="132.45" y="376.40" width="250.30" height="86.75" fill="none" stroke="#7c7c7c" stroke-width="1.6"/><path d="M133.44 462.46H135.37V458.89H137.69V460.47H140.21V461.57H145.04V461.84H150.84V461.48H152.77V462.46H154.70V461.84H166.30V462.46H197.23V461.51H203.03V462.46H206.89V461.70H220.43V462.46H223.32V460.17H225.45V462.46H258.31V459.75H260.44V461.48H264.88V461.70H272.62V461.48H276.48V461.79H285.18V460.56H287.31V462.46H319.01V461.70H321.91V460.17H324.03V462.46H326.74V461.84H335.44V460.39H337.37V462.46H343.17V460.26H345.30V462.46H347.42V378.51H349.74V462.46H379.86" stroke="#00f" stroke-opacity="0.72" stroke-width="1" stroke-linejoin="round" fill="none" clip-path="url(#cp)"/><g fill="#545454" font-size="10.67"><text x="128.8" y="466.50" text-anchor="end">0</text><text x="128.8" y="445.10" text-anchor="end">5000</text><text x="128.8" y="424.10" text-anchor="end">10000</text><text x="128.8" y="403.20" text-anchor="end">15000</text><text x="128.8" y="380.90" text-anchor="end">20000</text><text x="132.90" y="476.9" text-anchor="middle">0</text><text x="171.42" y="476.9" text-anchor="middle">20</text><text x="209.94" y="476.9" text-anchor="middle">40</text><text x="248.46" y="476.9" text-anchor="middle">60</text><text x="286.98" y="476.9" text-anchor="middle">80</text><text x="325.50" y="476.9" text-anchor="middle">100</text><text x="364.02" y="476.9" text-anchor="middle">120</text></g><g transform="translate(0.5,0)"><rect x="295.7" y="384.6" width="13.6" height="10.6" fill="#fff" stroke="#c2c2c2" stroke-width="0.9"/><rect x="297.1" y="386" width="10.8" height="7.8" fill="#00f"/><text x="313.2" y="394.1" font-size="10.67" fill="#8e8e8e">aida07 Stat</text><path d="M380.1 366.9L390.1 376.9L380.1 386.9L370.1 376.9Z" fill="#f00"/></g></g>
<g transform="translate(1428.00,122.00)"><path d="M172.02 376.40V463.15M210.54 376.40V463.15M249.06 376.40V463.15M287.58 376.40V463.15M326.10 376.40V463.15M364.62 376.40V463.15M132.45 441.00H382.75M132.45 419.60H382.75M132.45 398.20H382.75" stroke="#000" stroke-opacity="0.10" stroke-width="0.9" fill="none"/><rect x="132.45" y="376.40" width="250.30" height="86.75" fill="none" stroke="#7c7c7c" stroke-width="1.6"/><path d="M133.94 462.46H134.91V458.55H137.23V462.46H138.77V451.70H141.29V461.70H145.54V462.46H150.95V461.48H153.27V462.46H158.10V460.60H161.00V462.46H162.94V461.84H166.80V462.46H197.73V461.79H223.44V460.17H225.56V462.46H259.59V461.79H268.28V461.48H271.18V461.79H288.58V462.46H321.44V461.70H325.31V461.48H330.14V461.84H342.70V461.57H347.34V455.72H349.86V459.40H351.79V462.46H379.86" stroke="#00f" stroke-opacity="0.72" stroke-width="1" stroke-linejoin="round" fill="none" clip-path="url(#cp)"/><g fill="#545454" font-size="10.67"><text x="128.8" y="466.50" text-anchor="end">0</text><text x="128.8" y="445.10" text-anchor="end">5000</text><text x="128.8" y="424.10" text-anchor="end">10000</text><text x="128.8" y="403.20" text-anchor="end">15000</text><text x="128.8" y="380.90" text-anchor="end">20000</text><text x="132.90" y="476.9" text-anchor="middle">0</text><text x="171.42" y="476.9" text-anchor="middle">20</text><text x="209.94" y="476.9" text-anchor="middle">40</text><text x="248.46" y="476.9" text-anchor="middle">60</text><text x="286.98" y="476.9" text-anchor="middle">80</text><text x="325.50" y="476.9" text-anchor="middle">100</text><text x="364.02" y="476.9" text-anchor="middle">120</text></g><g transform="translate(1.0,0)"><rect x="295.7" y="384.6" width="13.6" height="10.6" fill="#fff" stroke="#c2c2c2" stroke-width="0.9"/><rect x="297.1" y="386" width="10.8" height="7.8" fill="#00f"/><text x="313.2" y="394.1" font-size="10.67" fill="#8e8e8e">aida08 Stat</text><path d="M380.1 366.9L390.1 376.9L380.1 386.9L370.1 376.9Z" fill="#f00"/></g></g>
<g transform="translate(0.00,244.00)"><path d="M172.02 376.40V463.15M210.54 376.40V463.15M249.06 376.40V463.15M287.58 376.40V463.15M326.10 376.40V463.15M364.62 376.40V463.15M132.45 441.00H382.75M132.45 419.60H382.75M132.45 398.20H382.75" stroke="#000" stroke-opacity="0.10" stroke-width="0.9" fill="none"/><rect x="132.45" y="376.40" width="250.30" height="86.75" fill="none" stroke="#7c7c7c" stroke-width="1.6"/><path d="M132.44 462.46H159.50V461.70H162.40V462.46H202.03V461.98H205.89V462.46H215.56V461.90H219.43V462.46H260.02V461.70H267.75V462.46H271.62V461.90H275.48V462.46H319.94V461.98H341.20V462.46H342.17V461.57H345.07V462.46H346.04V461.48H349.90V462.46H379.86" stroke="#00f" stroke-opacity="0.72" stroke-width="1" stroke-linejoin="round" fill="none" clip-path="url(#cp)"/><g fill="#545454" font-size="10.67"><text x="128.8" y="466.50" text-anchor="end">0</text><text x="128.8" y="445.10" text-anchor="end">5000</text><text x="128.8" y="424.10" text-anchor="end">10000</text><text x="128.8" y="403.20" text-anchor="end">15000</text><text x="128.8" y="380.90" text-anchor="end">20000</text><text x="132.90" y="476.9" text-anchor="middle">0</text><text x="171.42" y="476.9" text-anchor="middle">20</text><text x="209.94" y="476.9" text-anchor="middle">40</text><text x="248.46" y="476.9" text-anchor="middle">60</text><text x="286.98" y="476.9" text-anchor="middle">80</text><text x="325.50" y="476.9" text-anchor="middle">100</text><text x="364.02" y="476.9" text-anchor="middle">120</text></g><g transform="translate(0.0,0)"><rect x="295.7" y="384.6" width="13.6" height="10.6" fill="#fff" stroke="#c2c2c2" stroke-width="0.9"/><rect x="297.1" y="386" width="10.8" height="7.8" fill="#00f"/><text x="313.2" y="394.1" font-size="10.67" fill="#8e8e8e">aida09 Stat</text><path d="M380.1 366.9L390.1 376.9L380.1 386.9L370.1 376.9Z" fill="#f00"/></g></g>
<g transform="translate(476.00,244.00)"><path d="M172.02 376.40V463.15M210.54 376.40V463.15M249.06 376.40V463.15M287.58 376.40V463.15M326.10 376.40V463.15M364.62 376.40V463.15M132.45 441.00H382.75M132.45 419.60H382.75M132.45 398.20H382.75" stroke="#000" stroke-opacity="0.10" stroke-width="0.9" fill="none"/><rect x="132.45" y="376.40" width="250.30" height="86.75" fill="none" stroke="#7c7c7c" stroke-width="1.6"/><path d="M132.94 461.57H134.87V459.49H137.19V460.60H142.60V460.26H145.50V461.48H150.34V460.00H152.66V459.40H154.59V461.48H157.10V460.17H160.00V461.57H162.90V460.00H164.83V459.40H166.77V462.46H196.73V461.57H200.59V461.84H204.46V460.69H207.36V461.70H209.29V460.17H213.74V457.48H216.06V459.62H217.99V458.33H220.31V460.69H222.24V461.84H229.59V462.46H258.59V461.57H266.32V459.75H270.18V461.57H272.70V460.00H275.02V455.72H278.49V457.91H280.43V460.17H282.55V461.84H286.81V457.48H289.13V462.46H322.37V462.12H349.44V462.46H379.86" stroke="#00f" stroke-opacity="0.72" stroke-width="1" stroke-linejoin="round" fill="none" clip-path="url(#cp)"/><g fill="#545454" font-size="10.67"><text x="128.8" y="466.50" text-anchor="end">0</text><text x="128.8" y="445.10" text-anchor="end">5000</text><text x="128.8" y="424.10" text-anchor="end">10000</text><text x="128.8" y="403.20" text-anchor="end">15000</text><text x="128.8" y="380.90" text-anchor="end">20000</text><text x="132.90" y="476.9" text-anchor="middle">0</text><text x="171.42" y="476.9" text-anchor="middle">20</text><text x="209.94" y="476.9" text-anchor="middle">40</text><text x="248.46" y="476.9" text-anchor="middle">60</text><text x="286.98" y="476.9" text-anchor="middle">80</text><text x="325.50" y="476.9" text-anchor="middle">100</text><text x="364.02" y="476.9" text-anchor="middle">120</text></g><g transform="translate(0.0,0)"><rect x="295.7" y="384.6" width="13.6" height="10.6" fill="#fff" stroke="#c2c2c2" stroke-width="0.9"/><rect x="297.1" y="386" width="10.8" height="7.8" fill="#00f"/><text x="313.2" y="394.1" font-size="10.67" fill="#8e8e8e">aida10 Stat</text><path d="M380.1 366.9L390.1 376.9L380.1 386.9L370.1 376.9Z" fill="#f00"/></g></g>
<g transform="translate(952.00,244.00)"><path d="M172.02 376.40V463.15M210.54 376.40V463.15M249.06 376.40V463.15M287.58 376.40V463.15M326.10 376.40V463.15M364.62 376.40V463.15M132.45 441.00H382.75M132.45 419.60H382.75M132.45 398.20H382.75" stroke="#000" stroke-opacity="0.10" stroke-width="0.9" fill="none"/><rect x="132.45" y="376.40" width="250.30" height="86.75" fill="none" stroke="#7c7c7c" stroke-width="1.6"/><path d="M133.44 462.46H138.66V456.92H141.37V462.46H143.10V461.48H145.42V462.07H166.30V462.46H197.23V461.98H226.22V462.46H259.09V461.90H288.08V462.46H320.94V461.95H343.17V456.41H345.30V462.07H347.04V444.21H349.55V462.46H379.86" stroke="#00f" stroke-opacity="0.72" stroke-width="1" stroke-linejoin="round" fill="none" clip-path="url(#cp)"/><g fill="#545454" font-size="10.67"><text x="128.8" y="466.50" text-anchor="end">0</text><text x="128.8" y="445.10" text-anchor="end">5000</text><text x="128.8" y="424.10" text-anchor="end">10000</text><text x="128.8" y="403.20" text-anchor="end">15000</text><text x="128.8" y="380.90" text-anchor="end">20000</text><text x="132.90" y="476.9" text-anchor="middle">0</text><text x="171.42" y="476.9" text-anchor="middle">20</text><text x="209.94" y="476.9" text-anchor="middle">40</text><text x="248.46" y="476.9" text-anchor="middle">60</text><text x="286.98" y="476.9" text-anchor="middle">80</text><text x="325.50" y="476.9" text-anchor="middle">100</text><text x="364.02" y="476.9" text-anchor="middle">120</text></g><g transform="translate(0.5,0)"><rect x="295.7" y="384.6" width="13.6" height="10.6" fill="#fff" stroke="#c2c2c2" stroke-width="0.9"/><rect x="297.1" y="386" width="10.8" height="7.8" fill="#00f"/><text x="313.2" y="394.1" font-size="10.67" fill="#8e8e8e">aida11 Stat</text><path d="M380.1 366.9L390.1 376.9L380.1 386.9L370.1 376.9Z" fill="#f00"/></g></g>
<g transform="translate(1428.00,244.00)"><path d="M172.02 376.40V463.15M210.54 376.40V463.15M249.06 376.40V463.15M287.58 376.40V463.15M326.10 376.40V463.15M364.62 376.40V463.15M132.45 441.00H382.75M132.45 419.60H382.75M132.45 398.20H382.75" stroke="#000" stroke-opacity="0.10" stroke-width="0.9" fill="none"/><rect x="132.45" y="376.40" width="250.30" height="86.75" fill="none" stroke="#7c7c7c" stroke-width="1.6"/><path d="M133.94 462.46H138.77V459.15H141.29V462.46H141.67V462.07H166.80V462.46H197.73V461.95H226.72V462.46H259.59V461.84H288.58V462.46H321.44V461.70H343.67V460.17H347.34V450.84H349.66V460.35H351.98V462.46H379.86" stroke="#00f" stroke-opacity="0.72" stroke-width="1" stroke-linejoin="round" fill="none" clip-path="url(#cp)"/><g fill="#545454" font-size="10.67"><text x="128.8" y="466.50" text-anchor="end">0</text><text x="128.8" y="445.10" text-anchor="end">5000</text><text x="128.8" y="424.10" text-anchor="end">10000</text><text x="128.8" y="403.20" text-anchor="end">15000</text><text x="128.8" y="380.90" text-anchor="end">20000</text><text x="132.90" y="476.9" text-anchor="middle">0</text><text x="171.42" y="476.9" text-anchor="middle">20</text><text x="209.94" y="476.9" text-anchor="middle">40</text><text x="248.46" y="476.9" text-anchor="middle">60</text><text x="286.98" y="476.9" text-anchor="middle">80</text><text x="325.50" y="476.9" text-anchor="middle">100</text><text x="364.02" y="476.9" text-anchor="middle">120</text></g><g transform="translate(1.0,0)"><rect x="295.7" y="384.6" width="13.6" height="10.6" fill="#fff" stroke="#c2c2c2" stroke-width="0.9"/><rect x="297.1" y="386" width="10.8" height="7.8" fill="#00f"/><text x="313.2" y="394.1" font-size="10.67" fill="#8e8e8e">aida12 Stat</text><path d="M380.1 366.9L390.1 376.9L380.1 386.9L370.1 376.9Z" fill="#f00"/></g></g>
<g transform="translate(0.00,366.00)"><path d="M172.02 376.40V463.15M210.54 376.40V463.15M249.06 376.40V463.15M287.58 376.40V463.15M326.10 376.40V463.15M364.62 376.40V463.15M132.45 441.00H382.75M132.45 419.60H382.75M132.45 398.20H382.75" stroke="#000" stroke-opacity="0.10" stroke-width="0.9" fill="none"/><rect x="132.45" y="376.40" width="250.30" height="86.75" fill="none" stroke="#7c7c7c" stroke-width="1.6"/><path d="M132.44 462.46H138.63V457.61H141.14V461.98H165.30V462.46H196.23V461.84H225.22V462.46H258.09V461.76H287.08V462.46H319.94V461.76H325.74V461.48H329.61V461.84H335.21V452.56H337.53V456.41H339.46V458.55H341.40V460.26H343.33V417.46H345.65V430.00H347.39V433.94H349.32V445.41H351.45V462.46H379.86" stroke="#00f" stroke-opacity="0.72" stroke-width="1" stroke-linejoin="round" fill="none" clip-path="url(#cp)"/><g fill="#545454" font-size="10.67"><text x="128.8" y="466.50" text-anchor="end">0</text><text x="128.8" y="445.10" text-anchor="end">5000</text><text x="128.8" y="424.10" text-anchor="end">10000</text><text x="128.8" y="403.20" text-anchor="end">15000</text><text x="128.8" y="380.90" text-anchor="end">20000</text><text x="132.90" y="476.9" text-anchor="middle">0</text><text x="171.42" y="476.9" text-anchor="middle">20</text><text x="209.94" y="476.9" text-anchor="middle">40</text><text x="248.46" y="476.9" text-anchor="middle">60</text><text x="286.98" y="476.9" text-anchor="middle">80</text><text x="325.50" y="476.9" text-anchor="middle">100</text><text x="364.02" y="476.9" text-anchor="middle">120</text></g><g transform="translate(0.0,0)"><rect x="295.7" y="384.6" width="13.6" height="10.6" fill="#fff" stroke="#c2c2c2" stroke-width="0.9"/><rect x="297.1" y="386" width="10.8" height="7.8" fill="#00f"/><text x="313.2" y="394.1" font-size="10.67" fill="#8e8e8e">aida13 Stat</text><path d="M380.1 366.9L390.1 376.9L380.1 386.9L370.1 376.9Z" fill="#f00"/></g></g>
<g transform="translate(476.00,366.00)"><path d="M172.02 376.40V463.15M210.54 376.40V463.15M249.06 376.40V463.15M287.58 376.40V463.15M326.10 376.40V463.15M364.62 376.40V463.15M132.45 441.00H382.75M132.45 419.60H382.75M132.45 398.20H382.75" stroke="#000" stroke-opacity="0.10" stroke-width="0.9" fill="none"/><rect x="132.45" y="376.40" width="250.30" height="86.75" fill="none" stroke="#7c7c7c" stroke-width="1.6"/><path d="M132.94 462.46H137.97V459.15H140.29V462.46H140.67V462.12H165.80V462.46H196.73V461.98H225.72V462.46H258.59V461.98H287.58V462.46H320.44V461.95H349.44V462.46H379.86" stroke="#00f" stroke-opacity="0.72" stroke-width="1" stroke-linejoin="round" fill="none" clip-path="url(#cp)"/><g fill="#545454" font-size="10.67"><text x="128.8" y="466.50" text-anchor="end">0</text><text x="128.8" y="445.10" text-anchor="end">5000</text><text x="128.8" y="424.10" text-anchor="end">10000</text><text x="128.8" y="403.20" text-anchor="end">15000</text><text x="128.8" y="380.90" text-anchor="end">20000</text><text x="132.90" y="476.9" text-anchor="middle">0</text><text x="171.42" y="476.9" text-anchor="middle">20</text><text x="209.94" y="476.9" text-anchor="middle">40</text><text x="248.46" y="476.9" text-anchor="middle">60</text><text x="286.98" y="476.9" text-anchor="middle">80</text><text x="325.50" y="476.9" text-anchor="middle">100</text><text x="364.02" y="476.9" text-anchor="middle">120</text></g><g transform="translate(0.0,0)"><rect x="295.7" y="384.6" width="13.6" height="10.6" fill="#fff" stroke="#c2c2c2" stroke-width="0.9"/><rect x="297.1" y="386" width="10.8" height="7.8" fill="#00f"/><text x="313.2" y="394.1" font-size="10.67" fill="#8e8e8e">aida14 Stat</text><path d="M380.1 366.9L390.1 376.9L380.1 386.9L370.1 376.9Z" fill="#f00"/></g></g>
<g transform="translate(952.00,366.00)"><path d="M172.02 376.40V463.15M210.54 376.40V463.15M249.06 376.40V463.15M287.58 376.40V463.15M326.10 376.40V463.15M364.62 376.40V463.15M132.45 441.00H382.75M132.45 419.60H382.75M132.45 398.20H382.75" stroke="#000" stroke-opacity="0.10" stroke-width="0.9" fill="none"/><rect x="132.45" y="376.40" width="250.30" height="86.75" fill="none" stroke="#7c7c7c" stroke-width="1.6"/><path d="M133.44 461.57H135.37V459.32H136.73V432.01H138.85V334.00H141.56V453.41H143.10V461.57H145.62V462.46H149.87V461.48H151.22V460.17H152.77V462.46H156.25V459.83H156.64V456.84H158.57V458.55H160.50V462.46H163.40V458.98H166.30V462.46H197.23V461.51H199.16V462.46H212.69V461.40H214.63V462.46H222.36V461.79H227.58V334.00H258.31V462.46H263.92V461.57H265.85V462.46H267.78V461.79H269.72V462.46H279.38V461.48H281.31V458.12H283.44V462.46H285.37V453.41H287.69V462.46H320.36V334.00H322.49V462.46H325.77V461.48H327.13V334.00H328.48V459.83H329.06V334.00H330.61V456.41H332.35V459.83H333.70V462.46H335.44V449.99H337.56V462.46H339.30V461.57H341.24V334.00H343.56V458.12H345.68V446.56H347.42V380.22H349.36V453.41H351.10V462.46H379.86" stroke="#00f" stroke-opacity="0.72" stroke-width="1" stroke-linejoin="round" fill="none" clip-path="url(#cp)"/><g fill="#545454" font-size="10.67"><text x="128.8" y="466.50" text-anchor="end">0</text><text x="128.8" y="445.10" text-anchor="end">5000</text><text x="128.8" y="424.10" text-anchor="end">10000</text><text x="128.8" y="403.20" text-anchor="end">15000</text><text x="128.8" y="380.90" text-anchor="end">20000</text><text x="132.90" y="476.9" text-anchor="middle">0</text><text x="171.42" y="476.9" text-anchor="middle">20</text><text x="209.94" y="476.9" text-anchor="middle">40</text><text x="248.46" y="476.9" text-anchor="middle">60</text><text x="286.98" y="476.9" text-anchor="middle">80</text><text x="325.50" y="476.9" text-anchor="middle">100</text><text x="364.02" y="476.9" text-anchor="middle">120</text></g><g transform="translate(0.5,0)"><rect x="295.7" y="384.6" width="13.6" height="10.6" fill="#fff" stroke="#c2c2c2" stroke-width="0.9"/><rect x="297.1" y="386" width="10.8" height="7.8" fill="#00f"/><text x="313.2" y="394.1" font-size="10.67" fill="#8e8e8e">aida15 Stat</text><path d="M380.1 366.9L390.1 376.9L380.1 386.9L370.1 376.9Z" fill="#f00"/></g></g>
<g transform="translate(1428.00,366.00)"><path d="M172.02 376.40V463.15M210.54 376.40V463.15M249.06 376.40V463.15M287.58 376.40V463.15M326.10 376.40V463.15M364.62 376.40V463.15M132.45 441.00H382.75M132.45 419.60H382.75M132.45 398.20H382.75" stroke="#000" stroke-opacity="0.22" stroke-width="0.9" fill="none"/><rect x="132.45" y="376.40" width="250.30" height="86.75" fill="none" stroke="#000" stroke-width="1.6"/><path d="M133.94 461.70H135.29V458.98H136.84V454.27H138.58V397.09H141.48V454.27H143.22V462.46H146.50V458.98H148.63V462.46H150.37V458.46H152.69V462.46H154.24V461.48H157.14V462.46H158.10V455.34H160.42V461.84H165.83V462.46H197.73V461.48H201.59V460.17H205.07V461.57H211.84V457.35H214.16V461.84H224.79V461.57H228.66V462.46H259.59V461.84H275.05V459.15H277.95V462.46H280.85V461.70H285.68V459.15H287.81V462.46H321.44V461.79H327.24V457.35H329.56V460.60H335.17V407.19H337.68V438.43H339.61V447.21H341.54V454.70H343.67V462.46H345.41V430.94H347.34V334.00H349.66V422.17H351.40V462.46H379.86" stroke="#00f" stroke-opacity="0.72" stroke-width="1" stroke-linejoin="round" fill="none" clip-path="url(#cp)"/><g fill="#545454" font-size="10.67"><text x="128.8" y="466.50" text-anchor="end">0</text><text x="128.8" y="445.10" text-anchor="end">5000</text><text x="128.8" y="424.10" text-anchor="end">10000</text><text x="128.8" y="403.20" text-anchor="end">15000</text><text x="128.8" y="380.90" text-anchor="end">20000</text><text x="132.90" y="476.9" text-anchor="middle">0</text><text x="171.42" y="476.9" text-anchor="middle">20</text><text x="209.94" y="476.9" text-anchor="middle">40</text><text x="248.46" y="476.9" text-anchor="middle">60</text><text x="286.98" y="476.9" text-anchor="middle">80</text><text x="325.50" y="476.9" text-anchor="middle">100</text><text x="364.02" y="476.9" text-anchor="middle">120</text></g><g transform="translate(1.0,0)"><rect x="295.7" y="384.6" width="13.6" height="10.6" fill="#fff" stroke="#c2c2c2" stroke-width="0.9"/><rect x="297.1" y="386" width="10.8" height="7.8" fill="#00f"/><text x="313.2" y="394.1" font-size="10.67" fill="#000">aida16 Stat</text><path d="M380.1 366.9L390.1 376.9L380.1 386.9L370.1 376.9Z" fill="#0f0"/></g></g>
<g shape-rendering="crispEdges"><rect x="6" y="359" width="1" height="490" fill="#f00"/><rect x="7" y="360" width="1" height="489" fill="#a80000"/><rect x="483" y="359" width="1" height="490" fill="#f00"/><rect x="484" y="360" width="1" height="489" fill="#a80000"/><rect x="959" y="359" width="1" height="490" fill="#f00"/><rect x="960" y="360" width="1" height="489" fill="#a80000"/><rect x="1435" y="359" width="1" height="490" fill="#f00"/><rect x="1436" y="360" width="1" height="489" fill="#a80000"/><rect x="1912" y="359" width="1" height="490" fill="#f00"/><rect x="1913" y="360" width="1" height="489" fill="#a80000"/><rect x="6" y="359" width="1908" height="1" fill="#f00"/><rect x="7" y="360" width="1907" height="1" fill="#a80000"/><rect x="6" y="481" width="1908" height="1" fill="#f00"/><rect x="7" y="482" width="1907" height="1" fill="#a80000"/><rect x="6" y="603" width="1908" height="1" fill="#f00"/><rect x="7" y="604" width="1907" height="1" fill="#a80000"/><rect x="6" y="725" width="1908" height="1" fill="#f00"/><rect x="7" y="726" width="1907" height="1" fill="#a80000"/><rect x="6" y="847" width="1908" height="1" fill="#f00"/><rect x="7" y="848" width="1907" height="1" fill="#a80000"/></g>
</svg>
<div class="btn ui" style="left:6px;top:862px;width:100px;height:19px"><span>Empty Log Window</span></div>
<div class="btn ui" style="left:110px;top:862px;width:132px;height:19px"><span>Send Log Window to ELog</span></div>
<div class="btn ui" style="left:246px;top:862px;width:40px;height:19px"><span>Reload</span></div>
<div class="btn ui" style="left:290px;top:862px;width:35px;height:19px"><span>Reset</span></div>
<div class="btn ui" style="left:329px;top:862px;width:80px;height:19px"><span>Show Variables</span></div>
<div class="btn ui" style="left:413px;top:862px;width:96px;height:19px"><span>Show Log Window</span></div>
<div class="btn ui" style="left:513px;top:862px;width:79px;height:19px"><span>Enable Logging</span></div>
<div class="btn ui" style="left:1806px;top:862px;width:108px;height:19px"><span>How to use this page</span></div>
<div class="abs" style="right:6.4px;top:894px;font-size:12.8px;line-height:16px">Last Updated: February 09, 2024 12:49:05</div>
<div class="hr" style="top:922px"></div>
<div class="abs" style="left:7px;top:922px;font-size:12.8px;line-height:16px;color:#333">.</div>
<div class="abs" style="left:8px;top:936px;font-size:12.8px;line-height:16px;color:#0000f4;text-decoration:underline">Home</div>
</div>
</body></html>
